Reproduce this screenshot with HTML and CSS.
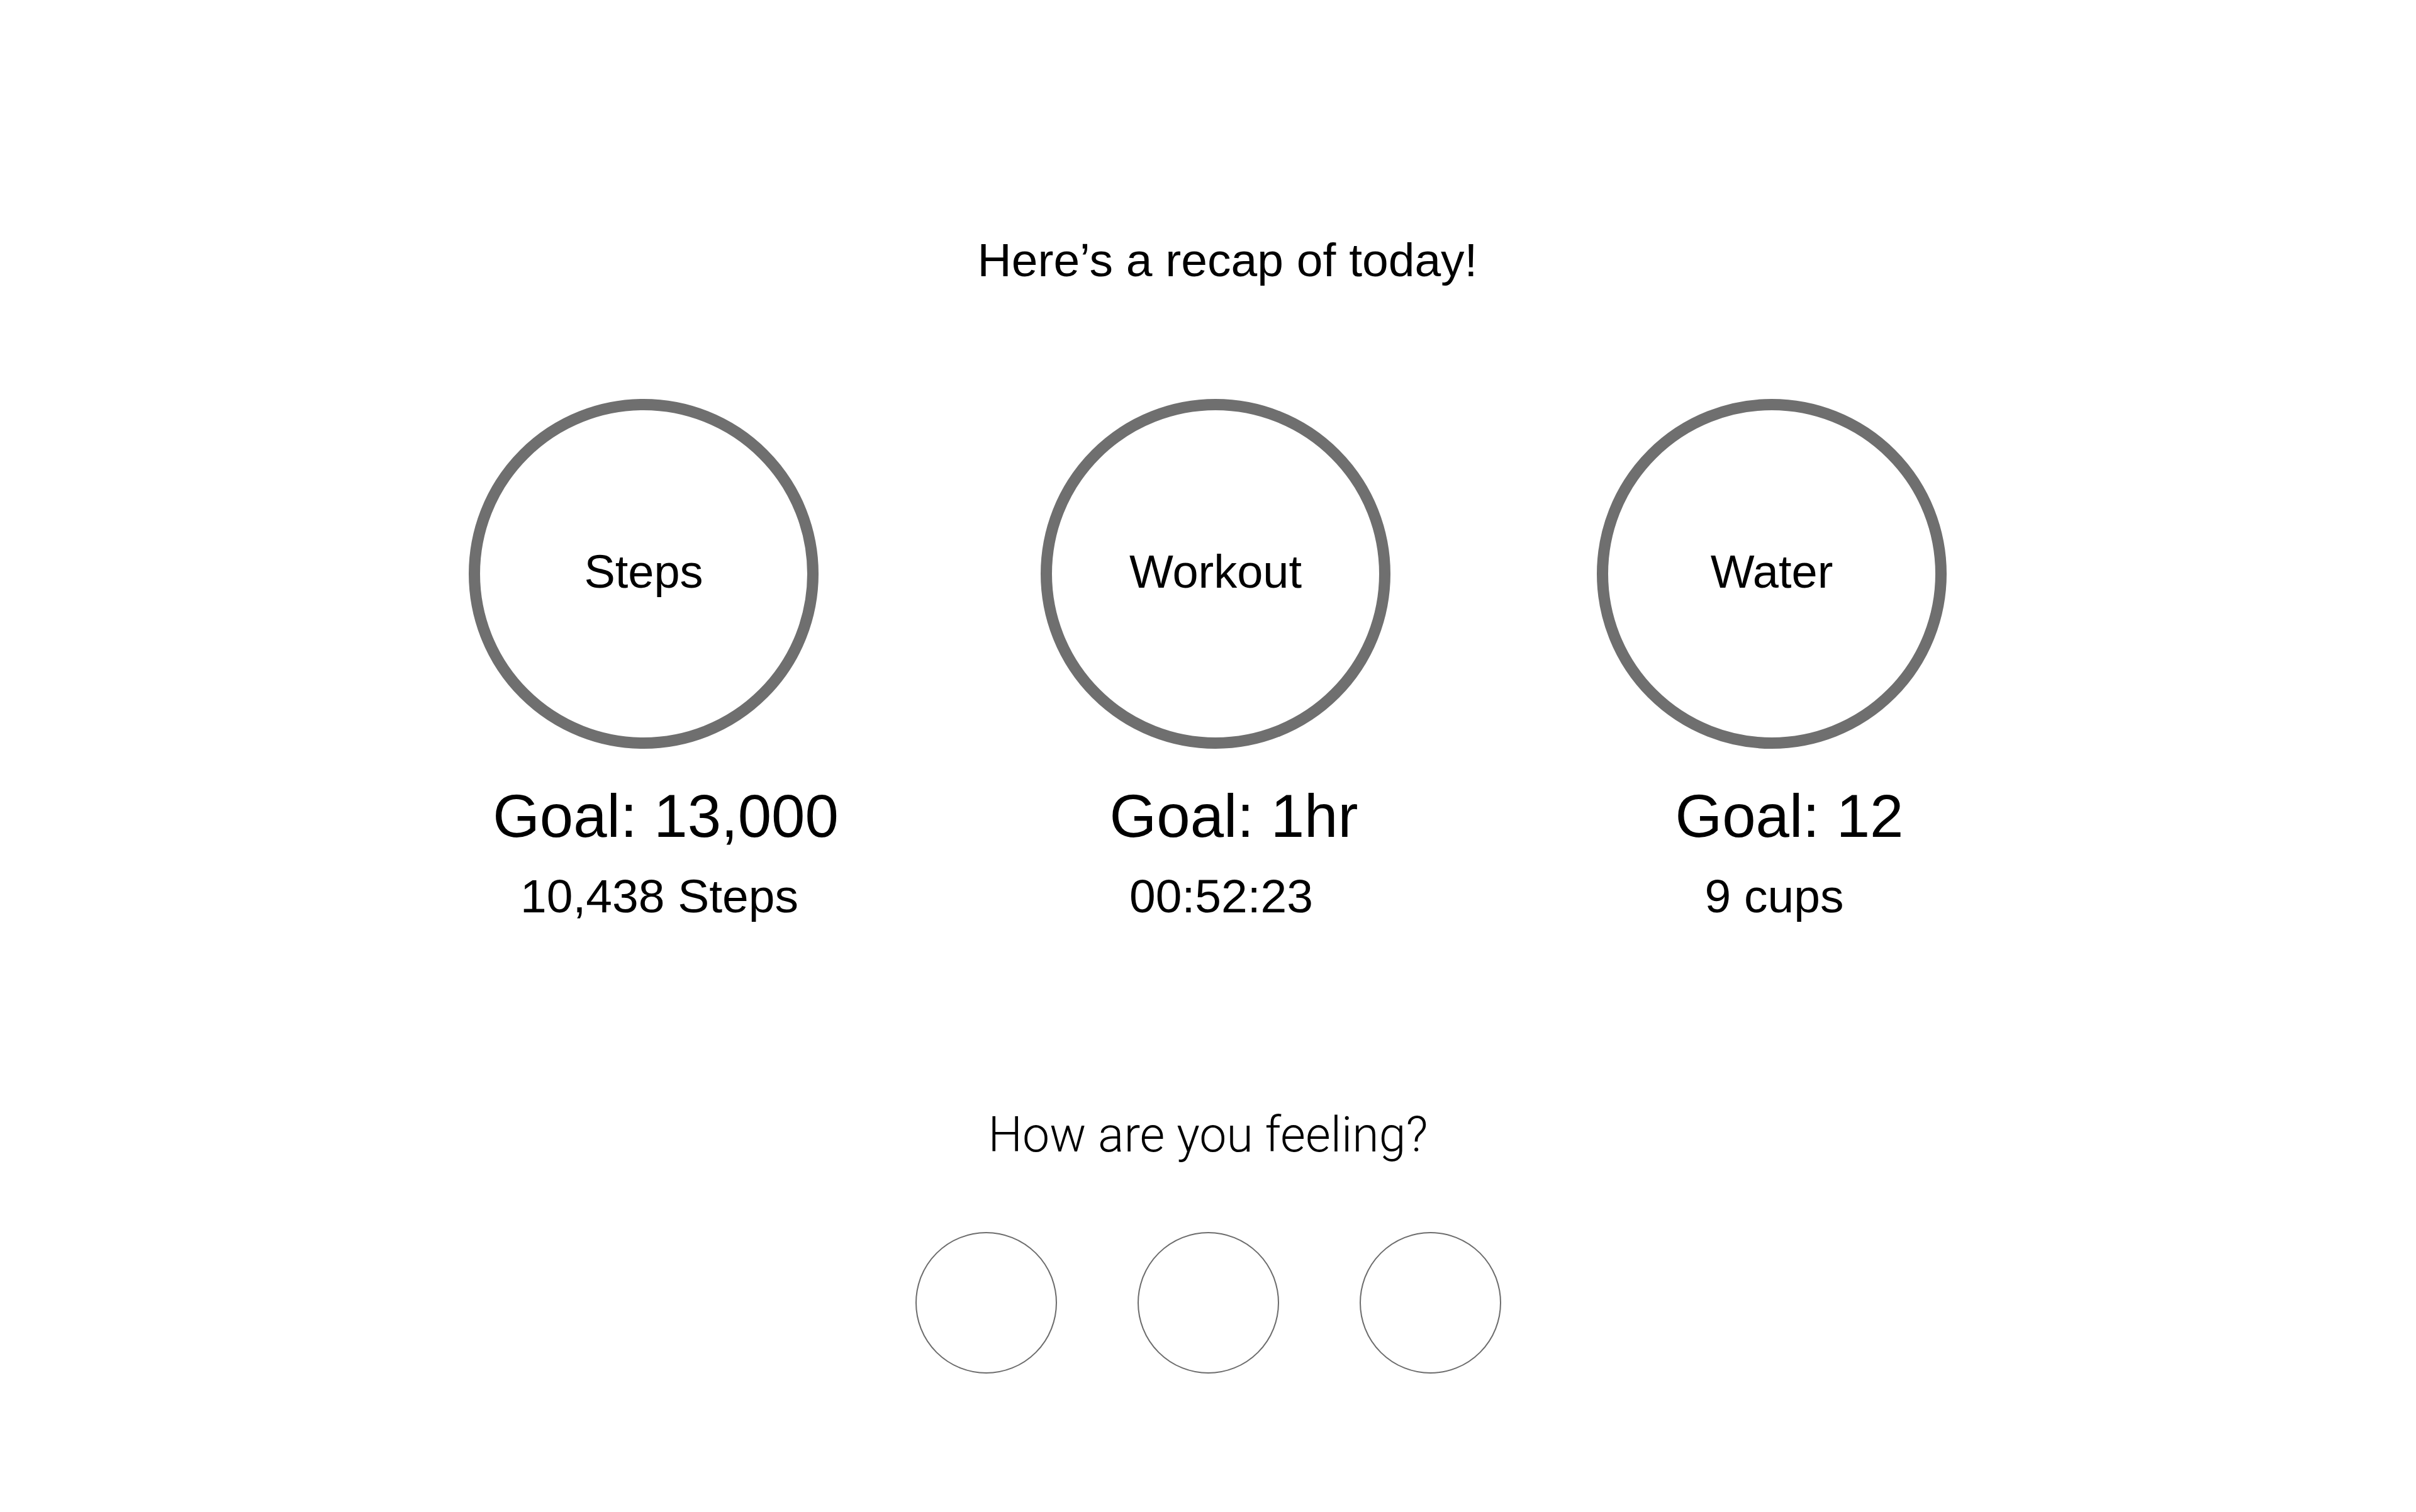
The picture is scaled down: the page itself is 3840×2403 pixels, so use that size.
FILE: index.html
```html
<!DOCTYPE html>
<html lang="en">
<head>
<meta charset="utf-8">
<title>Daily recap</title>
<link rel="stylesheet" href="styles.css">
</head>
<body>
<main class="recap">
  <h1 class="recap__title">Here’s a recap of today!</h1>

  <section class="stats">
    <div class="stat stat--steps">
      <div class="ring"><span class="ring__label">Steps</span></div>
      <p class="stat__goal">Goal: 13,000</p>
      <p class="stat__value">10,438 Steps</p>
    </div>
    <div class="stat stat--workout">
      <div class="ring"><span class="ring__label">Workout</span></div>
      <p class="stat__goal">Goal: 1hr</p>
      <p class="stat__value">00:52:23</p>
    </div>
    <div class="stat stat--water">
      <div class="ring"><span class="ring__label">Water</span></div>
      <p class="stat__goal">Goal: 12</p>
      <p class="stat__value">9 cups</p>
    </div>
  </section>

  <h2 class="mood__prompt">How are you feeling?</h2>
  <div class="mood">
    <button class="mood__option" type="button" aria-label="Option 1"></button>
    <button class="mood__option" type="button" aria-label="Option 2"></button>
    <button class="mood__option" type="button" aria-label="Option 3"></button>
  </div>
</main>
</body>
</html>
```

FILE: styles.css
```css
html, body {
  margin: 0;
  padding: 0;
  background: #ffffff;
}

body {
  font-family: "Liberation Sans", Arial, Helvetica, sans-serif;
  color: #000000;
  width: 3840px;
  min-height: 2403px;
}

.recap {
  display: flex;
  flex-direction: column;
  align-items: center;
  padding-top: 376px;
}

.recap__title {
  margin: 0 0 0 62px;
  font-size: 75px;
  line-height: 75px;
  font-weight: 400;
}

.stats {
  align-self: flex-start;
  display: flex;
  margin: 183px 0 0 745px;
}

.stat {
  width: 556px;
  display: flex;
  flex-direction: column;
  align-items: center;
}

.stat--workout { margin-left: 353px; }
.stat--water { margin-left: 328px; }

.ring {
  box-sizing: border-box;
  width: 556px;
  height: 556px;
  border: 18px solid #6f6f6f;
  border-radius: 50%;
  display: flex;
  align-items: center;
  justify-content: center;
}

.ring__label {
  font-size: 74px;
  line-height: 74px;
  margin-bottom: 6px;
}

.stat__goal {
  margin: 59px 0 0 70px;
  font-size: 96px;
  line-height: 96px;
  white-space: nowrap;
}

.stat__value {
  margin: 42px 0 0 0;
  font-size: 75px;
  line-height: 75px;
  white-space: nowrap;
}

.stat--workout .stat__goal { margin-left: 58px; }
.stat--water .stat__goal { margin-left: 56px; }

.stat--steps .stat__value { margin-left: 50px; }
.stat--workout .stat__value { margin-left: 18px; }
.stat--water .stat__value { margin-left: 8px; }

.mood__prompt {
  margin: 304px 0 0 0;
  font-family: Roboto, "Liberation Sans", sans-serif;
  font-weight: 300;
  font-size: 77px;
  line-height: 77px;
}

.mood {
  display: flex;
  gap: 128px;
  margin-top: 115px;
}

.mood__option {
  box-sizing: border-box;
  width: 225px;
  height: 225px;
  padding: 0;
  border: 2px solid #6c6c6c;
  border-radius: 50%;
  background: #ffffff;
}
```
